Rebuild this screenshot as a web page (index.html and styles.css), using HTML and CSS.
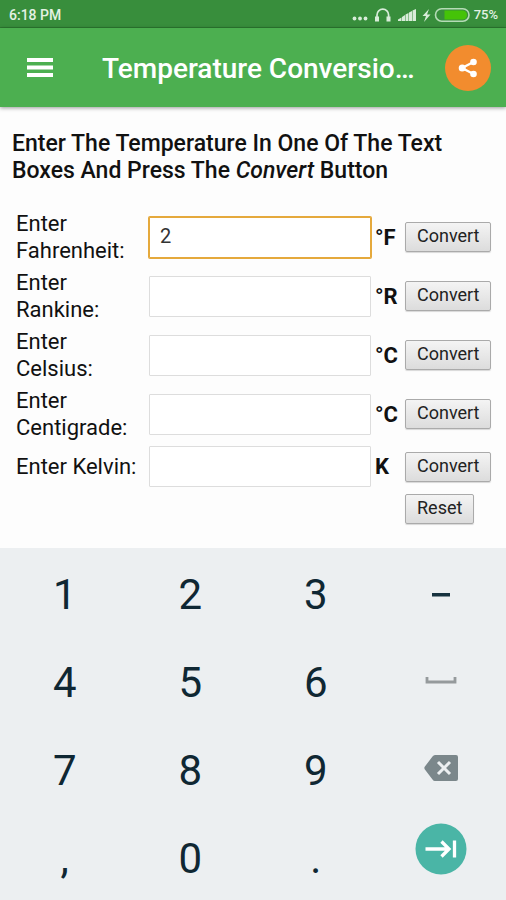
FILE: index.html
```html
<!DOCTYPE html>
<html lang="en">
<head>
<meta charset="utf-8">
<meta name="viewport" content="width=device-width, initial-scale=1">
<title>Temperature Conversion</title>
<link rel="stylesheet" href="styles.css">
</head>
<body>
<div class="status">
  <span class="clock">6:18 PM</span>
  <svg class="status-icons" width="120" height="20" viewBox="0 0 120 20" aria-hidden="true">
    <g fill="#d8ecd9">
      <circle cx="3.500" cy="13.500" r="1.900"/><circle cx="9" cy="13.500" r="1.900"/><circle cx="14.500" cy="13.500" r="1.900"/>
      <path d="M24 11.500h4v5h-4zM35.500 11.500h4v5h-4z"/>
      <path d="M47 16v-1.500l3.500-2V16zM51 16v-4l3-2v6zM54.500 16V9.500l3-1.500v8zM58 16V7.500L61 6v10zM61.500 16V5.500L65 4v12z"/>
      <path d="M78 4l-6.500 7h3.500l-2 6 6.500-7.500H76z"/>
    </g>
    <path d="M26 12.500V10a5.800 5.800 0 0 1 11.600 0v2.500" fill="none" stroke="#d8ecd9" stroke-width="1.700"/>
    <rect x="84.500" y="3.700" width="33.500" height="12.500" rx="6.200" fill="none" stroke="#b5dbb6" stroke-width="1.600"/>
    <path d="M93.500 5.500h18a4.500 4.500 0 0 1 0 9h-18z" fill="#45c308"/>
  </svg>
  <span class="battery">75%</span>
</div>
<header class="appbar">
  <button class="menu" type="button" aria-label="Menu">
    <svg width="28" height="20" viewBox="0 0 28 20" fill="#fff"><path d="M1 0h26v4H1zM1 7.500h26v4H1zM1 15h26v4H1z"/></svg>
  </button>
  <h1 class="title">Temperature Conversio…</h1>
  <button class="share" type="button" aria-label="Share">
    <svg width="20" height="20" viewBox="0 0 20 20" fill="#fff"><path d="M15.500 4L4 10l11.500 6" fill="none" stroke="#fff" stroke-width="2.400"/><circle cx="15.500" cy="4" r="3.300"/><circle cx="4.200" cy="10" r="3.500"/><circle cx="15.500" cy="16" r="3.300"/></svg>
  </button>
</header>
<main class="content">
  <h2 class="intro">Enter The Temperature In One Of The Text Boxes And Press The <em>Convert</em> Button</h2>
  <form class="converter">
    <div class="row"><label for="f">Enter Fahrenheit:</label><input class="field active" id="f" type="text" value="2"><b>°F</b><button class="btn" type="button">Convert</button></div>
    <div class="row"><label for="r">Enter Rankine:</label><input class="field" id="r" type="text"><b>°R</b><button class="btn" type="button">Convert</button></div>
    <div class="row"><label for="c">Enter Celsius:</label><input class="field" id="c" type="text"><b>°C</b><button class="btn" type="button">Convert</button></div>
    <div class="row"><label for="g">Enter Centigrade:</label><input class="field" id="g" type="text"><b>°C</b><button class="btn" type="button">Convert</button></div>
    <div class="row"><label for="k">Enter Kelvin:</label><input class="field" id="k" type="text"><b>K</b><button class="btn" type="button">Convert</button></div>
    <div class="row"><button class="btn reset" type="reset">Reset</button></div>
  </form>
</main>
<div class="keypad">
  <button class="key" type="button">1</button>
  <button class="key" type="button">2</button>
  <button class="key" type="button">3</button>
  <button class="key" type="button" aria-label="Minus"><svg width="18" height="4" viewBox="0 0 18 4"><path d="M0 0h18v3.500H0z" fill="#17323f"/></svg></button>
  <button class="key" type="button">4</button>
  <button class="key" type="button">5</button>
  <button class="key" type="button">6</button>
  <button class="key icon" type="button" aria-label="Space"><svg width="32" height="8" viewBox="0 0 32 8"><path d="M2 1v5h28V1" fill="none" stroke="#959a9c" stroke-width="2.800"/></svg></button>
  <button class="key" type="button">7</button>
  <button class="key" type="button">8</button>
  <button class="key" type="button">9</button>
  <button class="key icon" type="button" aria-label="Backspace"><svg width="34" height="26" viewBox="0 0 34 26"><path d="M11 0h21q2 0 2 2v22q0 2-2 2H11q-1.500 0-2.500-1.500L.700 14.200q-.700-1.200 0-2.400L8.500 1.500Q9.500 0 11 0z" fill="#7b878b"/><path d="M14 7l12 12M26 7l-12 12" stroke="#eceff1" stroke-width="3"/></svg></button>
  <button class="key" type="button">,</button>
  <button class="key" type="button">0</button>
  <button class="key" type="button">.</button>
  <button class="key next" type="button" aria-label="Next"><svg width="52" height="52" viewBox="0 0 52 52"><circle cx="26" cy="26" r="25.500" fill="#4ab5a6"/><path d="M10.500 26H34M26.500 18.500L34 26l-7.500 7.500M39.500 17.500v17" fill="none" stroke="#fff" stroke-width="3.300"/></svg></button>
</div>
</body>
</html>
```
FILE: styles.css
```css
* { box-sizing: border-box; }
body {
  margin: 0;
  min-height: 100vh;
  display: flex;
  flex-direction: column;
  background: #fdfdfd;
  color: #111;
  font-family: Roboto, "Liberation Sans", sans-serif;
  font-size: 22px;
  line-height: 27px;
}
button { border: 0; padding: 0; background: none; color: inherit; font: inherit; }
svg { display: block; }

.status {
  display: flex;
  align-items: center;
  height: 28px;
  padding: 2px 8px 0 9px;
  background: #388e3c;
  border-bottom: 1px solid #2c7a30;
  color: #e3f1e3;
  font-size: 13px;
  font-weight: 500;
  line-height: 20px;
}
.clock { font-size: 14px; }
.status-icons { margin-left: auto; }
.battery { margin-left: 3px; }

.appbar {
  display: flex;
  align-items: center;
  height: 79px;
  padding: 0 15px 0 26px;
  background: #4caf50;
  color: #fff;
  box-shadow: 0 1px 4px rgba(0, 0, 0, 0.4);
}
.title {
  flex: 1;
  min-width: 0;
  margin: 3px 24px 0 48px;
  overflow: hidden;
  white-space: nowrap;
  text-overflow: ellipsis;
  font-size: 28px;
  font-weight: 500;
  line-height: 40px;
}
.share {
  display: grid;
  place-items: center;
  width: 46px;
  height: 46px;
  border-radius: 50%;
  background: #f28c2e;
}

.content { padding: 23px 0 24px; }
.intro {
  margin: 0 12px 26px;
  font-size: 23px;
  font-weight: 500;
  line-height: 27px;
}
.converter {
  display: flex;
  flex-direction: column;
  gap: 5px;
  padding: 0 15px 0 16px;
}
.row {
  display: grid;
  grid-template-columns: 129px 1fr 26px 86px;
  column-gap: 4px;
  align-items: center;
}
.row b { font-weight: 700; }
.field {
  width: 100%;
  min-width: 0;
  height: 41px;
  padding: 0 10px 2px;
  border: 1px solid #ddd;
  border-radius: 1px;
  background: #fff;
  color: #333;
  font: inherit;
  font-size: 20px;
}
.active {
  border-color: #e5a93c;
  box-shadow: 0 0 0 1px #e5a93c;
}
.btn {
  height: 30px;
  padding: 0 11px 2px;
  border: 1px solid #aaa;
  border-radius: 2px;
  background: linear-gradient(#f4f4f4, #dcdcdc);
  box-shadow: 0 1px 1px rgba(0, 0, 0, 0.15);
  color: #222;
  font-size: 18px;
  line-height: 24px;
}
.reset { grid-column: 4; justify-self: start; margin-top: 2px; }

.keypad {
  flex: 1;
  display: grid;
  grid-template-columns: repeat(4, 1fr);
  grid-auto-rows: minmax(88px, 1fr);
  padding: 0 2px;
  background: #eceff1;
  color: #0f2733;
}
.key {
  display: flex;
  align-items: center;
  justify-content: center;
  padding-top: 6px;
  font-size: 42px;
  line-height: 48px;
}
.icon { padding-top: 0; }
.next { padding: 0 0 14px; }
```
